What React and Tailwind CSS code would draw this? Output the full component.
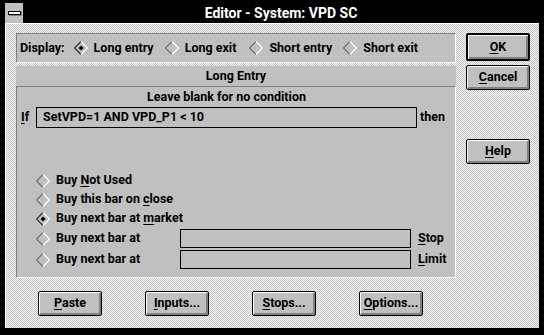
function Radio({ on }) {
  return (
    <svg width="14" height="14" viewBox="0 0 14 14" className="shrink-0">
      <path d="M7 0.5 L0.5 7 L7 13.5" fill="none" stroke={on ? "#303030" : "#707070"} strokeWidth="1.2" />
      <path d="M7 0.5 L13.5 7 L7 13.5" fill="none" stroke="#fff" strokeWidth="1.2" />
      {on && <path d="M7 4.5 L9.5 7 L7 9.5 L4.5 7 Z" fill="#000" />}
    </svg>
  );
}

function U({ children }) {
  return <span className="underline underline-offset-2 decoration-1">{children}</span>;
}

function Button({ children, def, className = "" }) {
  return (
    <div
      className={`flex w-[64px] items-center justify-center rounded-[2px] border-black bg-[#c0c0c0] shadow-[inset_1px_1px_0_#fff,inset_-2px_-2px_0_#808080] ${
        def ? "border-2" : "border"
      } ${className}`}
    >
      {children}
    </div>
  );
}

function Field({ w, h, children }) {
  return (
    <div className={`flex items-center border border-black bg-[#c0c0c0] pl-[6px] ${w} ${h}`}>{children}</div>
  );
}

export default function App() {
  const sunken = "border border-t-[#808080] border-l-[#808080] border-b-white border-r-white";
  return (
    <div className="flex h-[335px] w-[544px] flex-col bg-black px-[5px] pt-[3px] pb-[7px] font-['Roboto',sans-serif] text-[12.5px] font-bold text-black">
      {/* title bar */}
      <div className="flex h-[20px] shrink-0">
        <div className="flex w-[18px] items-center justify-center bg-[#c0c0c0]">
          <div className="h-[4px] w-[13px] border border-black bg-white shadow-[1px_1px_0_#808080]" />
        </div>
        <div className="flex flex-1 items-center justify-center text-[14px] text-white">Editor - System: VPD SC</div>
      </div>

      {/* client */}
      <div className="flex flex-1 gap-[10px] border-t border-l border-white bg-[#c0c0c0] bg-[image:conic-gradient(#fff_25%,#c0c0c0_0_50%,#fff_0_75%,#c0c0c0_0)] bg-[length:2px_2px] pt-[9px] pl-[10px]">
        <div className="flex w-[440px] flex-col">
          {/* display */}
          <div className={`flex h-[30px] items-center bg-[#c0c0c0] pl-[3px] ${sunken}`}>
            <span className="mr-[9px]">Display:</span>
            <div className="flex items-center gap-[6px]">
              <Radio on />
              <span>Long entry</span>
            </div>
            <div className="ml-[11px] flex items-center gap-[6px]">
              <Radio />
              <span>Long exit</span>
            </div>
            <div className="ml-[13px] flex items-center gap-[6px]">
              <Radio />
              <span>Short entry</span>
            </div>
            <div className="ml-[11px] flex items-center gap-[6px]">
              <Radio />
              <span>Short exit</span>
            </div>
          </div>

          {/* long entry panel */}
          <div className="mt-[3px] flex h-[20px] items-center justify-center bg-[#c0c0c0]">Long Entry</div>
          <div className={`flex h-[192px] flex-col bg-[#c0c0c0] ${sunken}`}>
            <div className="ml-[19px] h-[20px] w-[381px] text-center leading-[20px]">Leave blank for no condition</div>
            <div className="flex h-[21px] items-center">
              <span className="w-[19px] pl-[4px]">
                <U>I</U>f
              </span>
              <Field w="w-[381px]" h="h-[21px]">SetVPD=1 AND VPD_P1 &lt; 10</Field>
              <span className="ml-[3px]">then</span>
            </div>

            <div className="mt-[43px] flex h-[19px] items-center pl-[19px]">
              <Radio />
              <span className="ml-[6px]">
                Buy <U>N</U>ot Used
              </span>
            </div>
            <div className="flex h-[19px] items-center pl-[19px]">
              <Radio />
              <span className="ml-[6px]">
                Buy this bar on <U>c</U>lose
              </span>
            </div>
            <div className="flex h-[19px] items-center pl-[19px]">
              <Radio on />
              <span className="ml-[6px]">
                Buy next bar at <U>m</U>arket
              </span>
            </div>
            <div className="mt-[1px] flex h-[19px] items-center pl-[19px]">
              <Radio />
              <span className="ml-[6px] w-[124px]">Buy next bar at</span>
              <Field w="w-[231px]" h="h-[19px]" />
              <span className="ml-[7px]">
                <U>S</U>top
              </span>
            </div>
            <div className="mt-[2px] flex h-[19px] items-center pl-[19px]">
              <Radio />
              <span className="ml-[6px] w-[124px]">Buy next bar at</span>
              <Field w="w-[231px]" h="h-[19px]" />
              <span className="ml-[7px]">
                <U>L</U>imit
              </span>
            </div>
          </div>

          {/* bottom buttons */}
          <div className="mt-[13px] ml-[22px] flex gap-[43px]">
            <Button className="h-[25px]">
              <span>
                <U>P</U>aste
              </span>
            </Button>
            <Button className="h-[25px]">
              <span>
                <U>I</U>nputs...
              </span>
            </Button>
            <Button className="h-[25px]">
              <span>
                <U>S</U>tops...
              </span>
            </Button>
            <Button className="h-[25px]">
              <span>
                <U>O</U>ptions...
              </span>
            </Button>
          </div>
        </div>

        {/* right buttons */}
        <div className="flex w-[64px] flex-col">
          <Button def className="h-[28px]">
            <span>
              <U>O</U>K
            </span>
          </Button>
          <Button className="mt-[4px] h-[25px]">
            <span>
              <U>C</U>ancel
            </span>
          </Button>
          <Button className="mt-[49px] h-[25px]">
            <span>
              <U>H</U>elp
            </span>
          </Button>
        </div>
      </div>
    </div>
  );
}
